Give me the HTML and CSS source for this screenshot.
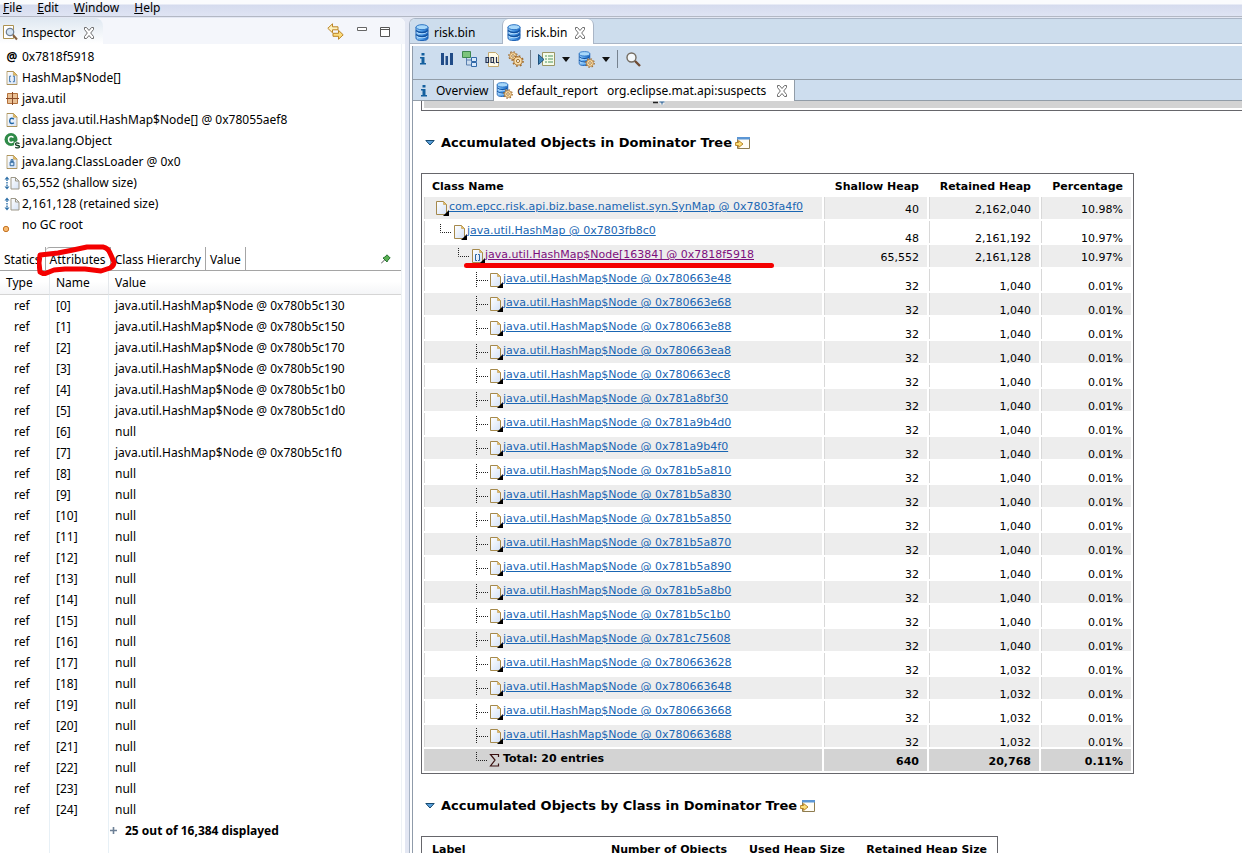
FILE: index.html
```html
<!DOCTYPE html>
<html lang="en">
<head>
<meta charset="utf-8">
<title>Memory Analyzer</title>
<link rel="stylesheet" href="styles.css">
</head>
<body>
<svg class="defs" aria-hidden="true">
  <defs>
    <linearGradient id="paper" x1="0" y1="0" x2="1" y2="1"><stop offset="0" stop-color="#fff"/><stop offset="1" stop-color="#d5e2f6"/></linearGradient>
    <linearGradient id="blue" x1="0" x2="1" y1="0" y2="0"><stop offset="0" stop-color="#9fd2fb"/><stop offset=".5" stop-color="#4c9be8"/><stop offset="1" stop-color="#1b62bd"/></linearGradient>
    <symbol id="close" viewBox="0 0 12 12"><path d="M1.5.5h2L6 3.500 8.500.5h2v2L7.700 6l2.800 3.500v2h-2L6 8.500l-2.500 3h-2v-2L4.300 6 1.500 2.500z" fill="#fff" stroke="#6e6e6e"/></symbol>
    <symbol id="page" viewBox="0 0 12 15"><path d="M.5.5h7l4 4v10h-11z" fill="url(#paper)" stroke="#a5894c"/><path d="M7.500.5v4h4z" fill="#e3bd69" stroke="#c19a4a" stroke-width=".6"/></symbol>
    <symbol id="db" viewBox="0 0 14 17"><path d="M1 3v11q0 2.500 6 2.500t6-2.500V3z" fill="url(#blue)" stroke="#1d62b5"/><path d="M1 6.500q1.500 2 6 2t6-2M1 10.500q1.500 2 6 2t6-2" fill="none" stroke="#0f50a0" stroke-width="1.300"/><path d="M1.500 8q1.500 1.800 5.500 1.800T12.500 8M1.500 12q1.500 1.800 5.500 1.800t5.500-1.800" fill="none" stroke="#c8e8ff" stroke-width=".8"/><ellipse cx="7" cy="3.200" rx="6" ry="2.500" fill="#a8d8fa" stroke="#2c74c4"/></symbol>
    <symbol id="gear" viewBox="0 0 10 10"><circle cx="5" cy="5" r="4.200" fill="none" stroke="#a06c2c" stroke-width="1.300" stroke-dasharray="1.500 1.800"/><circle cx="5" cy="5" r="3.400" fill="#fbe0aa" stroke="#b17a38" stroke-width=".8"/><circle cx="5" cy="5" r="1.300" fill="#fff" stroke="#98682a" stroke-width=".8"/></symbol>
    <symbol id="dbgear" viewBox="0 0 17 17"><use href="#db" width="13" height="15"/><use href="#gear" x="7" y="7" width="10" height="10"/></symbol>
    <symbol id="info" viewBox="0 0 8 12"><path d="M2.500 0h3v2.500h-3zM1 4h4.500v6H7v1.500H1V10h1.500V5.500H1z" fill="#15609f"/></symbol>
    <symbol id="branch-end" viewBox="0 0 22 22"><path d="M9.500 3v8.500H21" fill="none" stroke="#222" stroke-dasharray="1 1"/></symbol>
    <symbol id="branch" viewBox="0 0 22 22"><path d="M9.500 3v15M10 11.500h11" fill="none" stroke="#222" stroke-dasharray="1 1"/></symbol>
    <symbol id="obj" viewBox="0 0 18 22"><path d="M5.500 4.500h7l3 3v10h-10z" fill="url(#paper)" stroke="#a5894c"/><path d="M12.500 4.500v3h3z" fill="#e3bd69" stroke="#c19a4a" stroke-width=".6"/><path d="M18 13v6h-6z" fill="#000"/></symbol>
    <symbol id="arr" viewBox="0 0 18 22"><use href="#obj" width="18" height="22"/><path d="M10 9.500H8.500v6H10M11 9.500h1.500v6H11" fill="none" stroke="#2b67a5"/></symbol>
    <symbol id="sigma" viewBox="0 0 18 22"><path d="M13.500 8V5.500h-8l4.500 5.500-4.500 6h8V14.500" fill="none" stroke="#3a1111" stroke-width="1.200"/></symbol>
    <symbol id="twisty" viewBox="0 0 10 8"><path d="M.8 1.500h8.400L5 6z" fill="#5aa0dc" stroke="#174a70"/></symbol>
    <symbol id="open" viewBox="0 0 16 14"><path d="M2.500 1.500h12v11h-12z" fill="#fffdf6" stroke="#8e7c50"/><path d="M2 1h13v2.500H2z" fill="#5b96d5"/><path d="M.6 6.500h3V4.500L8 8l-4.400 3.500v-2h-3z" fill="#fbdf7c" stroke="#b27c1b" stroke-width=".9"/></symbol>
    <symbol id="size" viewBox="0 0 16 14"><path d="M.5 3.500 3 .5l2.500 3zM.5 10.500l2.500 3 2.500-3z" fill="#2f70a8"/><path d="M3 3.500v7" stroke="#2f70a8" stroke-width="1.400" stroke-dasharray="1.500 1"/><path d="M7 1.500h4.500L15 5v8H7z" fill="url(#paper)" stroke="#9d9889"/><path d="M11.500 1.500V5H15" fill="none" stroke="#9d9889"/></symbol>
  </defs>
</svg>

<nav class="menubar" aria-label="Main menu">
  <button><u>F</u>ile</button><button><u>E</u>dit</button><button><u>W</u>indow</button><button><u>H</u>elp</button>
</nav>

<div class="workbench">
  <section class="inspector">
    <header class="view-bar">
      <button class="view-tab">
        <svg width="15" height="16" viewBox="0 0 15 16"><path d="M.5.5h10v13H.5z" fill="#fff" stroke="#ad9250"/><circle cx="7" cy="7" r="3.700" fill="#d4e4f4" stroke="#718194" stroke-width="1.300"/><path d="m10 10 4 4.500" stroke="#85603f" stroke-width="2"/></svg>
        <span>Inspector</span>
        <svg width="12" height="12"><use href="#close"/></svg>
      </button>
      <div class="view-tools">
        <button aria-label="Link with snapshot"><svg width="17" height="17" viewBox="0 0 17 17"><path d="M5.500.8v3H11v3H5.500v3L.8 5.300z" fill="#fdf0bd" stroke="#bb8424"/><path d="M11.500 7.300v3H6v3h5.500v3l4.700-4.500z" fill="#fbdc7d" stroke="#bb8424"/></svg></button>
        <button aria-label="Minimize"><svg width="12" height="17" viewBox="0 0 12 17"><path d="M1.500 4.500h9v3h-9z" fill="#fff" stroke="#666"/></svg></button>
        <button aria-label="Maximize"><svg width="12" height="17" viewBox="0 0 12 17"><path d="M1.500 4.500h9v9h-9zM1.500 6.500h9" fill="#fff" stroke="#555"/></svg></button>
      </div>
    </header>

    <div class="inspector-body">
      <ul class="facts">
        <li><span class="ico at">@</span>0x7818f5918</li>
        <li><span class="ico"><svg width="12" height="14" viewBox="0 0 12 15"><use href="#page"/><path d="M5 5.500H3.500v6H5M7 5.500h1.500v6H7" fill="none" stroke="#2b67a5"/></svg></span>HashMap$Node[]</li>
        <li><span class="ico"><svg width="13" height="13" viewBox="0 0 13 13"><path d="M1.500 1.500h10v10h-10z" fill="#eac195" stroke="#b3703b"/><path d="M6.500 0v13M0 6.500h13" stroke="#8a4b28"/></svg></span>java.util</li>
        <li><span class="ico"><svg width="12" height="14" viewBox="0 0 12 15"><use href="#page"/><path d="M8 6.500Q5.500 4.800 4 6.500 3 8.500 4 10.500q1.500 1.500 4 0" fill="none" stroke="#1e64a6" stroke-width="1.500"/></svg></span>class java.util.HashMap$Node[] @ 0x78055aef8</li>
        <li><span class="ico"><svg width="17" height="16" viewBox="0 0 17 16"><circle cx="7" cy="6.500" r="6.500" fill="#2f8a48"/><path d="M9.500 4.500Q7 2.500 5 4.500q-1.200 2 0 4 2 2 4.500 0" fill="none" stroke="#fff" stroke-width="1.600"/><path d="M15.500 10.500q-4-1.500-4 .8 0 1 2 1.200t2 1.300q-.5 1.800-4.300.5" fill="none" stroke="#fff" stroke-width="3"/><path d="M15.500 10.500q-4-1.500-4 .8 0 1 2 1.200t2 1.300q-.5 1.800-4.300.5" fill="none" stroke="#123f22" stroke-width="1.300"/></svg></span>java.lang.Object</li>
        <li><span class="ico"><svg width="12" height="14" viewBox="0 0 12 15"><use href="#page"/><path d="M4 7.500h4v4H4zM5 5h2v2.500H5z" fill="#d0e6fb" stroke="#245f99"/></svg></span>java.lang.ClassLoader @ 0x0</li>
        <li><span class="ico"><svg width="16" height="14"><use href="#size"/></svg></span>65,552 (shallow size)</li>
        <li><span class="ico"><svg width="16" height="14"><use href="#size"/></svg></span>2,161,128 (retained size)</li>
        <li><span class="ico root"><svg width="8" height="8" viewBox="0 0 8 8"><circle cx="4" cy="4" r="2.700" fill="#f8ba70" stroke="#c47425"/></svg></span>no GC root</li>
      </ul>

      <div class="subtabs">
        <button>Statics</button><button class="on">Attributes</button><button>Class Hierarchy</button><button>Value</button>
        <button class="pin" aria-label="Pin"><svg width="10" height="10" viewBox="0 0 10 10"><path d="m0 9.500 4-4" stroke="#555"/><path d="m2 4 2-1L6 .8 9.200 4 7 6 6 8z" fill="#5ab053" stroke="#287431"/></svg></button>
        <svg class="mark ring" width="80" height="32" viewBox="0 0 80 32" fill="none" stroke="#f40000" stroke-width="5" stroke-linejoin="round"><path d="M3 11 21 9 36 6 50 3 66 3q5 1 7 6l4 9q0 4-4 6L64 27 48 25H28L17 26 7 30 3 28 2 19z"/></svg>
      </div>

      <table class="attrs">
        <colgroup><col class="c-type"><col class="c-name"><col></colgroup>
        <thead><tr><th>Type</th><th>Name</th><th>Value</th></tr></thead>
        <tbody>
          <tr><td>ref</td><td>[0]</td><td>java.util.HashMap$Node @ 0x780b5c130</td></tr>
          <tr><td>ref</td><td>[1]</td><td>java.util.HashMap$Node @ 0x780b5c150</td></tr>
          <tr><td>ref</td><td>[2]</td><td>java.util.HashMap$Node @ 0x780b5c170</td></tr>
          <tr><td>ref</td><td>[3]</td><td>java.util.HashMap$Node @ 0x780b5c190</td></tr>
          <tr><td>ref</td><td>[4]</td><td>java.util.HashMap$Node @ 0x780b5c1b0</td></tr>
          <tr><td>ref</td><td>[5]</td><td>java.util.HashMap$Node @ 0x780b5c1d0</td></tr>
          <tr><td>ref</td><td>[6]</td><td>null</td></tr>
          <tr><td>ref</td><td>[7]</td><td>java.util.HashMap$Node @ 0x780b5c1f0</td></tr>
          <tr><td>ref</td><td>[8]</td><td>null</td></tr>
          <tr><td>ref</td><td>[9]</td><td>null</td></tr>
          <tr><td>ref</td><td>[10]</td><td>null</td></tr>
          <tr><td>ref</td><td>[11]</td><td>null</td></tr>
          <tr><td>ref</td><td>[12]</td><td>null</td></tr>
          <tr><td>ref</td><td>[13]</td><td>null</td></tr>
          <tr><td>ref</td><td>[14]</td><td>null</td></tr>
          <tr><td>ref</td><td>[15]</td><td>null</td></tr>
          <tr><td>ref</td><td>[16]</td><td>null</td></tr>
          <tr><td>ref</td><td>[17]</td><td>null</td></tr>
          <tr><td>ref</td><td>[18]</td><td>null</td></tr>
          <tr><td>ref</td><td>[19]</td><td>null</td></tr>
          <tr><td>ref</td><td>[20]</td><td>null</td></tr>
          <tr><td>ref</td><td>[21]</td><td>null</td></tr>
          <tr><td>ref</td><td>[22]</td><td>null</td></tr>
          <tr><td>ref</td><td>[23]</td><td>null</td></tr>
          <tr><td>ref</td><td>[24]</td><td>null</td></tr>
          <tr class="more"><td></td><td></td><td><svg width="7" height="7" viewBox="0 0 7 7"><path d="M3.500 0v7M0 3.500h7" stroke="#6d8096" stroke-width="1.600"/></svg>25 out of 16,384 displayed</td></tr>
          <tr class="rest"><td></td><td></td><td></td></tr>
        </tbody>
      </table>
    </div>
  </section>

  <main class="editor">
    <div class="file-tabs">
      <button class="file-tab"><svg width="14" height="17"><use href="#db"/></svg><span>risk.bin</span></button>
      <button class="file-tab on"><svg width="14" height="17"><use href="#db"/></svg><span>risk.bin</span><svg width="12" height="12"><use href="#close"/></svg></button>
    </div>
    <div class="pane">
      <div class="toolbar">
        <button class="t-info" aria-label="Overview"><svg width="8" height="12"><use href="#info"/></svg></button>
        <button aria-label="Histogram"><svg width="12" height="12" viewBox="0 0 12 12"><path d="M0 0h3v12H0zM4.500 3h2.500v9H4.500zM9 0h3v12H9z" fill="#204b87"/></svg></button>
        <button aria-label="Dominator tree"><svg width="15" height="16" viewBox="0 0 15 16"><path d="M4.500 6v8H10M4.500 9H10" fill="none" stroke="#5a7fae"/><path d="M.5.5h8v6h-8z" fill="#7cc47c" stroke="#3e8750"/><path d="M9.500 6.500h5v4h-5zM9.500 11.500h5v4h-5z" fill="#d9e9fb" stroke="#3269a8"/></svg></button>
        <button aria-label="OQL"><svg width="15" height="15" viewBox="0 0 15 15"><path d="M3.500.5h7l3 3v11h-10z" fill="#fffbe9" stroke="#c3a970"/><path d="M1 5.500h2.500v5H1zM6 5.500h2.500v5H6zM8 9.500l1.500 2M11.500 5v5.500H14" fill="none" stroke="#22304e" stroke-width="1.200"/></svg></button>
        <button aria-label="Thread overview"><svg width="16" height="16" viewBox="0 0 16 16"><use href="#gear" width="10" height="10"/><use href="#gear" x="4" y="4" width="12" height="12"/></svg></button>
        <i class="sep"></i>
        <button class="wide" aria-label="Run report"><svg width="17" height="15" viewBox="0 0 17 15"><path d="M4.500.5h12v13h-12z" fill="#f5fbe9" stroke="#9b9664"/><path d="M7 4h2m1 0h5M7 7h2m1 0h5M7 10h2m1 0h5" stroke="#4f9560"/><path d="M.5 2.500 6 7.500l-5.500 5z" fill="#4086b8" stroke="#1b4f7c"/></svg></button>
        <button class="drop" aria-label="Run report menu"><svg width="8" height="5"><path d="M0 0h8L4 5z" fill="#111"/></svg></button>
        <button class="wide" aria-label="Query browser"><svg width="17" height="17"><use href="#dbgear"/></svg></button>
        <button class="drop" aria-label="Query browser menu"><svg width="8" height="5"><path d="M0 0h8L4 5z" fill="#111"/></svg></button>
        <i class="sep"></i>
        <button class="wide" aria-label="Find"><svg width="15" height="15" viewBox="0 0 15 15"><circle cx="5.500" cy="5.500" r="4.500" fill="#f4f8fb" stroke="#736b60" stroke-width="1.400"/><path d="m9 9 5 5" stroke="#704b33" stroke-width="2.400"/></svg></button>
      </div>
      <div class="page-tabs">
        <button class="page-tab"><svg width="8" height="12"><use href="#info"/></svg><span>Overview</span></button>
        <button class="page-tab on"><svg width="17" height="17"><use href="#dbgear"/></svg><span>default_report</span><span>org.eclipse.mat.api:suspects</span><svg width="12" height="12"><use href="#close"/></svg></button>
      </div>
      <div class="report">
        <div class="previous"><div><svg width="12" height="4" viewBox="0 0 12 4"><path d="M0 1.500h5" stroke="#222" stroke-width="1.500"/><path d="M6 0h6v2h-2v2H8V2H6z" fill="#507ba5" stroke="#fff" stroke-width=".7"/></svg></div></div>

        <h2><svg width="10" height="8"><use href="#twisty"/></svg><span>Accumulated Objects in Dominator Tree</span><a href="#tree" aria-label="Open in dominator tree"><svg width="16" height="14"><use href="#open"/></svg></a></h2>
        <table class="tree" id="tree">
          <thead><tr><th>Class Name</th><th>Shallow Heap</th><th>Retained Heap</th><th>Percentage</th></tr></thead>
          <tbody>
            <tr class="mid"><td><div><svg class="n"><use href="#obj"/></svg><a href="#o1">com.epcc.risk.api.biz.base.namelist.syn.SynMap @ 0x7803fa4f0</a></div></td><td>40</td><td>2,162,040</td><td>10.98%</td></tr>
            <tr><td><div><svg class="b"><use href="#branch-end"/></svg><svg class="n"><use href="#obj"/></svg><a href="#o2">java.util.HashMap @ 0x7803fb8c0</a></div></td><td>48</td><td>2,161,192</td><td>10.97%</td></tr>
            <tr class="mid"><td><div class="in1"><svg class="b"><use href="#branch-end"/></svg><svg class="n"><use href="#arr"/></svg><a class="seen" href="#o3">java.util.HashMap$Node[16384] @ 0x7818f5918</a><svg class="mark line" width="310" height="5" viewBox="0 0 310 5"><path d="M2.500 2.500h305" stroke="#f40000" stroke-width="5" stroke-linecap="round"/></svg></div></td><td>65,552</td><td>2,161,128</td><td>10.97%</td></tr>
            <tr><td><div class="in2"><svg class="b"><use href="#branch"/></svg><svg class="n"><use href="#obj"/></svg><a href="#n1">java.util.HashMap$Node @ 0x780663e48</a></div></td><td>32</td><td>1,040</td><td>0.01%</td></tr>
            <tr><td><div class="in2"><svg class="b"><use href="#branch"/></svg><svg class="n"><use href="#obj"/></svg><a href="#n2">java.util.HashMap$Node @ 0x780663e68</a></div></td><td>32</td><td>1,040</td><td>0.01%</td></tr>
            <tr><td><div class="in2"><svg class="b"><use href="#branch"/></svg><svg class="n"><use href="#obj"/></svg><a href="#n3">java.util.HashMap$Node @ 0x780663e88</a></div></td><td>32</td><td>1,040</td><td>0.01%</td></tr>
            <tr><td><div class="in2"><svg class="b"><use href="#branch"/></svg><svg class="n"><use href="#obj"/></svg><a href="#n4">java.util.HashMap$Node @ 0x780663ea8</a></div></td><td>32</td><td>1,040</td><td>0.01%</td></tr>
            <tr><td><div class="in2"><svg class="b"><use href="#branch"/></svg><svg class="n"><use href="#obj"/></svg><a href="#n5">java.util.HashMap$Node @ 0x780663ec8</a></div></td><td>32</td><td>1,040</td><td>0.01%</td></tr>
            <tr><td><div class="in2"><svg class="b"><use href="#branch"/></svg><svg class="n"><use href="#obj"/></svg><a href="#n6">java.util.HashMap$Node @ 0x781a8bf30</a></div></td><td>32</td><td>1,040</td><td>0.01%</td></tr>
            <tr><td><div class="in2"><svg class="b"><use href="#branch"/></svg><svg class="n"><use href="#obj"/></svg><a href="#n7">java.util.HashMap$Node @ 0x781a9b4d0</a></div></td><td>32</td><td>1,040</td><td>0.01%</td></tr>
            <tr><td><div class="in2"><svg class="b"><use href="#branch"/></svg><svg class="n"><use href="#obj"/></svg><a href="#n8">java.util.HashMap$Node @ 0x781a9b4f0</a></div></td><td>32</td><td>1,040</td><td>0.01%</td></tr>
            <tr><td><div class="in2"><svg class="b"><use href="#branch"/></svg><svg class="n"><use href="#obj"/></svg><a href="#n9">java.util.HashMap$Node @ 0x781b5a810</a></div></td><td>32</td><td>1,040</td><td>0.01%</td></tr>
            <tr><td><div class="in2"><svg class="b"><use href="#branch"/></svg><svg class="n"><use href="#obj"/></svg><a href="#n10">java.util.HashMap$Node @ 0x781b5a830</a></div></td><td>32</td><td>1,040</td><td>0.01%</td></tr>
            <tr><td><div class="in2"><svg class="b"><use href="#branch"/></svg><svg class="n"><use href="#obj"/></svg><a href="#n11">java.util.HashMap$Node @ 0x781b5a850</a></div></td><td>32</td><td>1,040</td><td>0.01%</td></tr>
            <tr><td><div class="in2"><svg class="b"><use href="#branch"/></svg><svg class="n"><use href="#obj"/></svg><a href="#n12">java.util.HashMap$Node @ 0x781b5a870</a></div></td><td>32</td><td>1,040</td><td>0.01%</td></tr>
            <tr><td><div class="in2"><svg class="b"><use href="#branch"/></svg><svg class="n"><use href="#obj"/></svg><a href="#n13">java.util.HashMap$Node @ 0x781b5a890</a></div></td><td>32</td><td>1,040</td><td>0.01%</td></tr>
            <tr><td><div class="in2"><svg class="b"><use href="#branch"/></svg><svg class="n"><use href="#obj"/></svg><a href="#n14">java.util.HashMap$Node @ 0x781b5a8b0</a></div></td><td>32</td><td>1,040</td><td>0.01%</td></tr>
            <tr><td><div class="in2"><svg class="b"><use href="#branch"/></svg><svg class="n"><use href="#obj"/></svg><a href="#n15">java.util.HashMap$Node @ 0x781b5c1b0</a></div></td><td>32</td><td>1,040</td><td>0.01%</td></tr>
            <tr><td><div class="in2"><svg class="b"><use href="#branch"/></svg><svg class="n"><use href="#obj"/></svg><a href="#n16">java.util.HashMap$Node @ 0x781c75608</a></div></td><td>32</td><td>1,040</td><td>0.01%</td></tr>
            <tr><td><div class="in2"><svg class="b"><use href="#branch"/></svg><svg class="n"><use href="#obj"/></svg><a href="#n17">java.util.HashMap$Node @ 0x780663628</a></div></td><td>32</td><td>1,032</td><td>0.01%</td></tr>
            <tr><td><div class="in2"><svg class="b"><use href="#branch"/></svg><svg class="n"><use href="#obj"/></svg><a href="#n18">java.util.HashMap$Node @ 0x780663648</a></div></td><td>32</td><td>1,032</td><td>0.01%</td></tr>
            <tr><td><div class="in2"><svg class="b"><use href="#branch"/></svg><svg class="n"><use href="#obj"/></svg><a href="#n19">java.util.HashMap$Node @ 0x780663668</a></div></td><td>32</td><td>1,032</td><td>0.01%</td></tr>
            <tr><td><div class="in2"><svg class="b"><use href="#branch"/></svg><svg class="n"><use href="#obj"/></svg><a href="#n20">java.util.HashMap$Node @ 0x780663688</a></div></td><td>32</td><td>1,032</td><td>0.01%</td></tr>
          </tbody>
          <tfoot><tr class="mid"><td><div class="in2"><svg class="b"><use href="#branch-end"/></svg><svg class="n"><use href="#sigma"/></svg><span>Total: 20 entries</span></div></td><td>640</td><td>20,768</td><td>0.11%</td></tr></tfoot>
        </table>

        <h2><svg width="10" height="8"><use href="#twisty"/></svg><span>Accumulated Objects by Class in Dominator Tree</span><a href="#classes" aria-label="Open by class"><svg width="16" height="14"><use href="#open"/></svg></a></h2>
        <table class="tree classes" id="classes">
          <thead><tr><th>Label</th><th>Number of Objects</th><th>Used Heap Size</th><th>Retained Heap Size</th></tr></thead>
          <tbody><tr><td></td><td></td><td></td><td></td></tr></tbody>
        </table>
      </div>
    </div>
  </main>
</div>
</body>
</html>
```

FILE: styles.css
```css
* { box-sizing: border-box; }

body {
  margin: 0;
  height: 100vh;
  display: flex;
  flex-direction: column;
  overflow: hidden;
  background: #e3e7f3;
  color: #000;
  font: 12px/20px "Noto Sans", sans-serif;
}

button {
  margin: 0;
  padding: 0;
  border: 0;
  background: none;
  color: inherit;
  font: inherit;
  white-space: nowrap;
}

svg { display: block; flex: none; }
.defs { position: absolute; width: 0; height: 0; }
.mark { position: absolute; pointer-events: none; }

/* Menu */
.menubar {
  flex: none;
  display: flex;
  gap: 15px;
  height: 17px;
  padding-left: 3px;
  background: linear-gradient(#fafbfd 0 4px, #d5dbee 5px, #dfe4f3);
  border-bottom: 1px solid #b3b8c4;
}
.menubar button { line-height: 16px; }

.workbench {
  flex: 1;
  min-height: 0;
  display: flex;
  gap: 4px;
  padding-top: 1px;
}

/* Inspector */
.inspector {
  flex: 0 0 405px;
  display: flex;
  flex-direction: column;
  background: #fff;
  border-top-right-radius: 6px;
  overflow: hidden;
}
.view-bar {
  flex: none;
  display: flex;
  justify-content: space-between;
  height: 26px;
  background: #f4f6fb;
}
.view-tab {
  display: flex;
  align-items: center;
  gap: 4px;
  padding: 4px 8px 0 3px;
  background: linear-gradient(#dfe8f1, #fff);
  border-top-right-radius: 8px;
}
.view-tab svg:last-child { margin-left: 3px; }
.view-tools {
  display: flex;
  align-items: center;
  gap: 11px;
  padding-right: 14px;
}
.view-tools button:first-child { padding-right: 2px; }
.view-tools button + button { margin-left: -1px; }
.view-tools button:last-child { margin-left: 0; }
.inspector-body {
  flex: 1;
  min-height: 0;
  margin-right: 3px;
  border-right: 1px solid #eef2f5;
  overflow: hidden;
}

.facts {
  margin: 0;
  padding: 2px 0 12px;
  list-style: none;
}
.facts li {
  display: flex;
  align-items: center;
  height: 21px;
}
.ico {
  flex: 0 0 22px;
  display: flex;
  justify-content: center;
  padding-left: 2px;
}
.ico.at { font-weight: bold; }
.ico.root { justify-content: flex-start; padding-top: 8px; }

.subtabs {
  position: relative;
  display: flex;
  height: 24px;
  border-bottom: 1px solid #a5a5a5;
}
.subtabs button {
  padding: 2px 4px 0 4px;
  border-right: 1px solid #a5a5a5;
}
.subtabs .on {
  border-top: 1px solid #a5a5a5;
  border-top-left-radius: 4px;
}
.subtabs .pin {
  margin-left: auto;
  padding: 0 10px 0 0;
  border: 0;
}
.ring { left: 37px; top: -3px; }

.attrs {
  width: 100%;
  table-layout: fixed;
  border-collapse: separate;
  border-spacing: 0;
}
.c-type { width: 50px; }
.c-name { width: 59px; }
.attrs th {
  height: 24px;
  padding: 0 6px;
  text-align: left;
  font-weight: normal;
  background: linear-gradient(#fff 45%, #f4f5f7);
  border-right: 1px solid #e4e8ec;
  border-bottom: 1px solid #d5d5d5;
}
.attrs td {
  height: 21px;
  padding: 0 6px;
  border-right: 1px solid #e7f0f6;
}
.attrs td:first-child { padding-left: 14px; }
.attrs th:last-child, .attrs td:last-child { border-right: 0; }
.attrs .more td:last-child {
  display: flex;
  align-items: center;
  gap: 8px;
  padding-left: 1px;
  font-weight: bold;
}
.attrs .rest td { height: 60px; }

/* Editor */
.editor {
  flex: 1;
  min-width: 0;
  display: flex;
  flex-direction: column;
  border: 1px solid #a9b5c6;
  border-width: 1px 0 0 1px;
  border-top-left-radius: 6px;
  background: #fff;
  overflow: hidden;
}
.file-tabs {
  flex: none;
  display: flex;
  height: 25px;
  background: #cddded;
  border-bottom: 1px solid #a9b5c6;
}
.file-tab {
  display: flex;
  align-items: center;
  gap: 5px;
  width: 92px;
  height: 25px;
  padding: 2px 0 0 5px;
}
.file-tab.on {
  padding-left: 4px;
  background: #fff;
  border: 1px solid #a9b5c6;
  border-width: 0 1px;
  border-radius: 6px 6px 0 0;
}
.file-tab svg:last-child:not(:first-child) { margin-left: 2px; }
.pane {
  flex: 1;
  min-height: 0;
  display: flex;
  flex-direction: column;
  margin: 2px 0 0 2px;
  border-left: 1px solid #8f9baa;
}
.toolbar {
  flex: none;
  display: flex;
  align-items: center;
  height: 33px;
  padding: 0 0 7px 5px;
  background: #cdddee;
}
.toolbar button {
  display: flex;
  align-items: center;
  justify-content: center;
  width: 23px;
  height: 24px;
}
.toolbar .t-info { width: 10px; margin-right: 7px; }
.toolbar .wide { width: 24px; }
.toolbar .drop { width: 16px; }
.sep {
  width: 1px;
  height: 18px;
  margin: 0 3px;
  background: #76828f;
}
.page-tabs {
  flex: none;
  display: flex;
  height: 22px;
  background: #cdddee;
  border: 1px solid #929da8;
  border-width: 1px 0;
}
.page-tab {
  display: flex;
  align-items: center;
  gap: 8px;
  height: 21px;
  padding: 0 5px 0 7px;
}
.page-tab.on {
  gap: 4px;
  padding: 0 6px 0 2px;
  background: #fff;
  border: 1px solid #929da8;
  border-width: 0 1px;
}
.page-tab.on span + span { margin-left: 5px; }
.page-tab.on svg:last-child { margin-left: 6px; }

/* Report */
.report {
  flex: 1;
  min-height: 0;
  padding-left: 8px;
  overflow: hidden;
  font: 11px/16px "DejaVu Sans", sans-serif;
}
.previous {
  padding: 0 0 2px 2px;
  border: 1px solid #66666b;
  border-width: 0 0 1px 1px;
}
.previous div {
  height: 7px;
  padding-left: 229px;
  background: #d3d3d3;
}
.report h2 {
  display: flex;
  align-items: center;
  gap: 6px;
  height: 20px;
  margin: 22px 0 20px 4px;
  font-size: 13px;
  line-height: 20px;
}
.report h2 a { margin-left: -3px; }
.tree {
  width: 713px;
  border: 1px solid #66666b;
  border-collapse: separate;
  border-spacing: 2px;
  table-layout: fixed;
}
.tree th {
  height: 19px;
  padding: 2px 8px 0;
  text-align: right;
  white-space: nowrap;
}
.tree th:first-child { width: 398px; text-align: left; }
.tree th:nth-child(2) { width: 103px; }
.tree th:nth-child(3) { width: 110px; }
.tree td {
  height: 22px;
  padding: 14px 8px 0;
  text-align: right;
  line-height: 8px;
  border-left: 1px solid #d8d8d8;
}
.tree .mid td { padding-top: 4px; line-height: 18px; }
.tree td:first-child, .tree .mid td:first-child {
  padding: 0 0 0 6px;
  text-align: left;
  line-height: 20px;
}
.tree tbody tr:nth-child(odd) td { background: #ededed; }
.tree tfoot td {
  background: #d3d3d3;
  border-color: #d3d3d3;
  font-weight: bold;
}
.tree td div {
  position: relative;
  display: flex;
  height: 22px;
  white-space: nowrap;
}
.tree .in1 { padding-left: 18px; }
.tree .in2 { padding-left: 36px; }
.n { width: 18px; height: 22px; }
.b { width: 22px; height: 22px; margin-right: -4px; }
.line { left: 33px; top: 18px; }
.tree a { color: #1a66b3; }
.tree a.seen { color: #7d0f7d; }

.classes { width: 577px; }
.classes th:first-child { width: 164px; }
.classes th:nth-child(2) { width: 145px; }
.classes th:nth-child(3) { width: 116px; }
```
